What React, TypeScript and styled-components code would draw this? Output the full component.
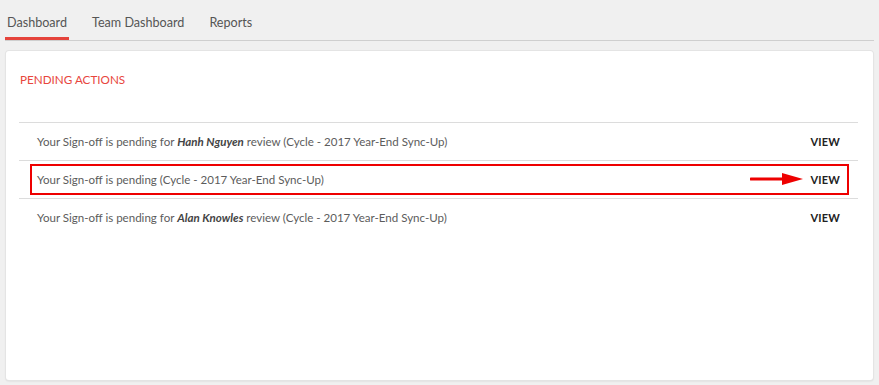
import React from 'react';
import styled, { createGlobalStyle } from 'styled-components';

const GlobalStyle = createGlobalStyle`
    html, body {
        margin: 0;
        padding: 0;
        background: #f0f0f0;
        font-family: Lato, 'Open Sans', sans-serif;
    }
`;

type Action = {
    name?: string;
    highlighted?: boolean;
};

const actions: Action[] = [
    { name: 'Hanh Nguyen' },
    { highlighted: true },
    { name: 'Alan Knowles' },
];

const tabs = ['Dashboard', 'Team Dashboard', 'Reports'];

const App: React.FC = () => {
    return (
        <Page>
            <GlobalStyle />
            <TabBar>
                {tabs.map((t, i) => (
                    <Tab key={t} active={i === 0}>
                        {t}
                    </Tab>
                ))}
            </TabBar>
            <Card>
                <Title>PENDING ACTIONS</Title>
                <List>
                    {actions.map((a, i) => (
                        <Row key={i}>
                            <RowText>
                                Your Sign-off is pending
                                {a.name && (
                                    <>
                                        {' '}for <Name>{a.name}</Name> review
                                    </>
                                )}{' '}
                                (Cycle - 2017 Year-End Sync-Up)
                            </RowText>
                            <ViewLink>VIEW</ViewLink>
                            {a.highlighted && (
                                <>
                                    <Highlight />
                                    <Arrow width="54" height="14" viewBox="0 0 54 14">
                                        <line x1="1" y1="7" x2="34" y2="7" stroke="#ee0000" strokeWidth="3" strokeLinecap="round" />
                                        <polygon points="32,1 53,7 32,13" fill="#ee0000" />
                                    </Arrow>
                                </>
                            )}
                        </Row>
                    ))}
                </List>
            </Card>
        </Page>
    );
};

export default App;

const Page = styled.div`
    width: 879px;
    height: 385px;
    overflow: hidden;
`;

const TabBar = styled.nav`
    display: flex;
    gap: 21px;
    margin: 0 5px;
    height: 40px;
    border-bottom: 1px solid #cfcfcf;
`;

const Tab = styled.div<{ active?: boolean }>`
    box-sizing: border-box;
    height: 40px;
    padding: 15px 2px 0;
    font-size: 12.6px;
    color: #555;
    border-bottom: 3px solid ${(p) => (p.active ? '#e5433b' : 'transparent')};
`;

const Card = styled.section`
    box-sizing: border-box;
    margin: 10px 6px 0;
    height: 329px;
    background: #fff;
    border-radius: 3px;
    box-shadow: 0 0 0 1px #e4e4e4, 0 1px 2px rgba(0, 0, 0, 0.15);
    padding: 21px 15px 0 13px;
`;

const Title = styled.h2`
    margin: 0 0 0 1px;
    font-size: 11.7px;
    font-weight: 400;
    color: #e8463d;
    line-height: 14px;
`;

const List = styled.div`
    margin-top: 36px;
`;

const Row = styled.div`
    position: relative;
    display: flex;
    align-items: center;
    justify-content: space-between;
    height: 38px;
    padding: 0 18px;
    border-top: 1px solid #dcdcdc;
    box-sizing: border-box;
`;

const RowText = styled.span`
    font-size: 11.55px;
    color: #5c5c5c;
`;

const Name = styled.em`
    font-weight: 700;
    color: #444;
`;

const ViewLink = styled.span`
    font-size: 11px;
    font-weight: 700;
    color: #222;
    letter-spacing: 0.2px;
`;

const Highlight = styled.div`
    position: absolute;
    left: 11px;
    right: 9px;
    top: 3px;
    bottom: 3px;
    border: 2px solid #ee0000;
    pointer-events: none;
`;

const Arrow = styled.svg`
    position: absolute;
    right: 54px;
    top: 11px;
`;
